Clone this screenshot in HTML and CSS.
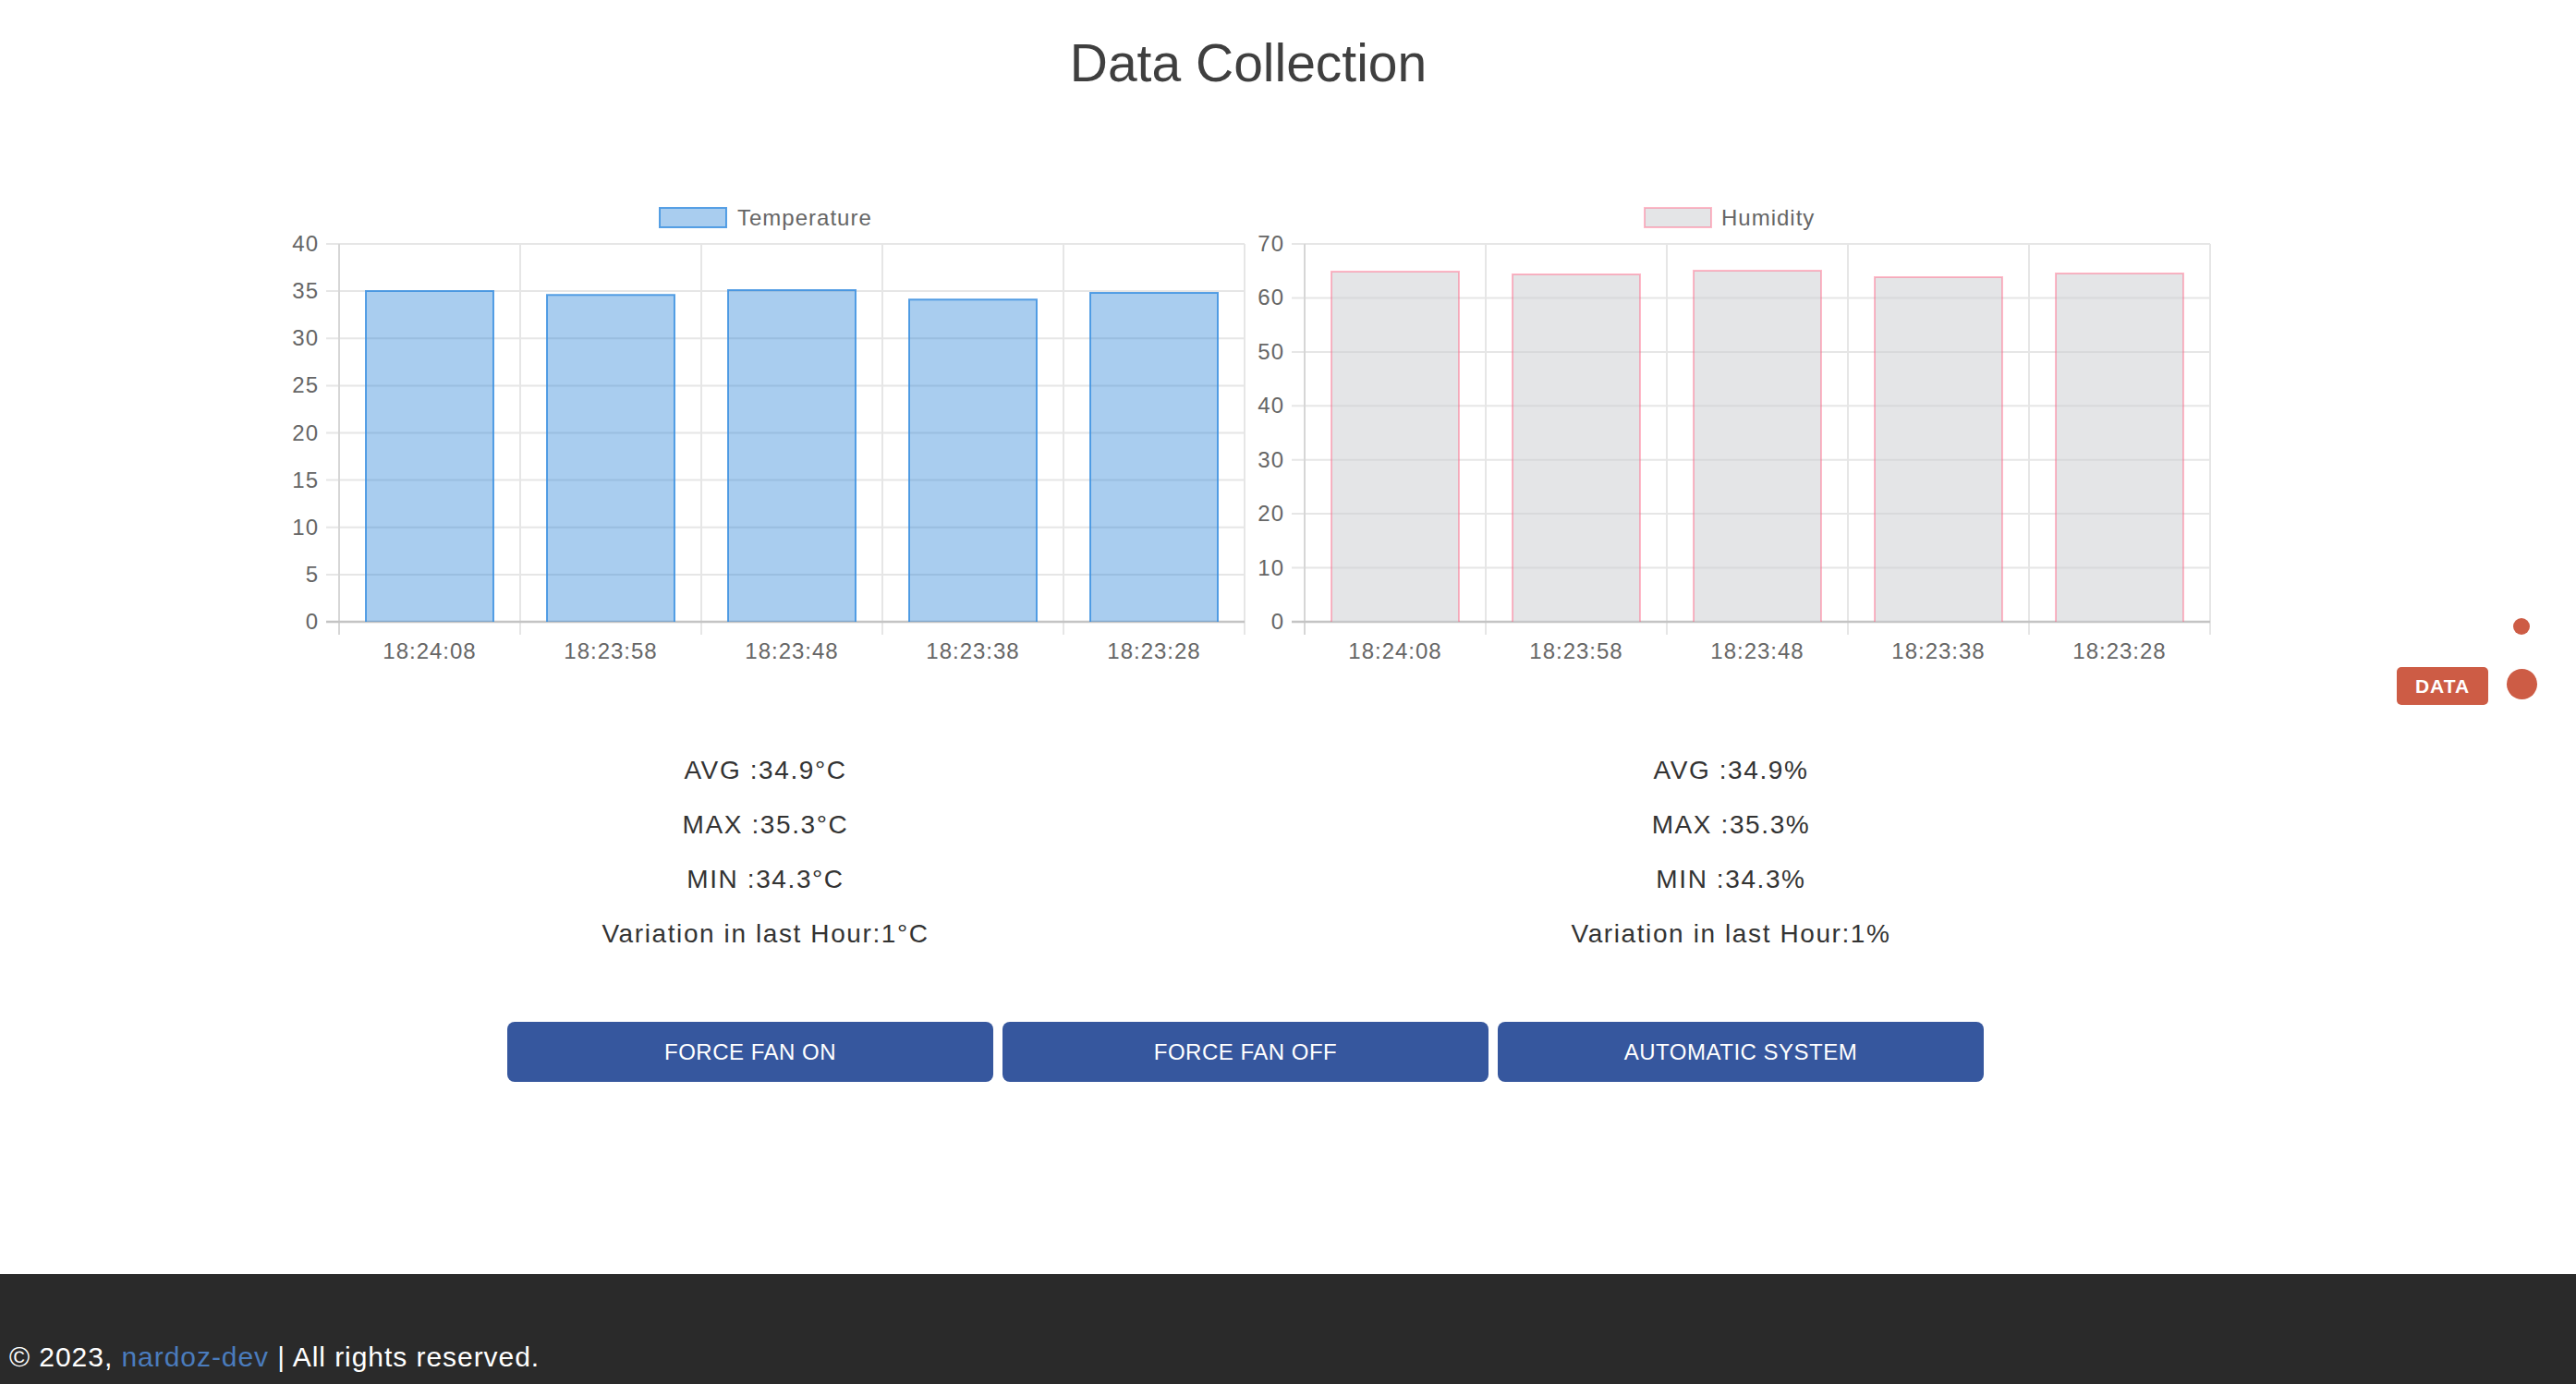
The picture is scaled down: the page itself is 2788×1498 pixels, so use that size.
FILE: index.html
```html
<!DOCTYPE html>
<html lang="en">
<head>
<meta charset="utf-8">
<title>Data Collection</title>
<link rel="stylesheet" href="styles.css">
</head>
<body>
<div class="page">
  <main class="main">
    <h1 class="title">Data Collection</h1>
    <section class="charts">
      <div class="col">
        <svg class="chart" width="1045" height="540" viewBox="0 0 1045 540">
          <rect class="legend-box temp-bar" x="408" y="25" width="72" height="21"/>
          <text class="legend-text" x="492" y="44">Temperature</text>
          <g class="grid">
            <line x1="47" y1="64" x2="1041" y2="64"/>
            <line x1="47" y1="115.1" x2="1041" y2="115.1"/>
            <line x1="47" y1="166.3" x2="1041" y2="166.3"/>
            <line x1="47" y1="217.4" x2="1041" y2="217.4"/>
            <line x1="47" y1="268.5" x2="1041" y2="268.5"/>
            <line x1="47" y1="319.6" x2="1041" y2="319.6"/>
            <line x1="47" y1="370.8" x2="1041" y2="370.8"/>
            <line x1="47" y1="421.9" x2="1041" y2="421.9"/>
            <line x1="257" y1="64" x2="257" y2="487"/>
            <line x1="453" y1="64" x2="453" y2="487"/>
            <line x1="649" y1="64" x2="649" y2="487"/>
            <line x1="845" y1="64" x2="845" y2="487"/>
            <line x1="1041" y1="64" x2="1041" y2="487"/>
          </g>
          <line class="axis" x1="61" y1="64" x2="61" y2="487"/>
          <line class="zero" x1="47" y1="473" x2="1041" y2="473"/>
          <g class="ylabels">
            <text x="39" y="72">40</text>
            <text x="39" y="123.1">35</text>
            <text x="39" y="174.3">30</text>
            <text x="39" y="225.4">25</text>
            <text x="39" y="276.5">20</text>
            <text x="39" y="327.6">15</text>
            <text x="39" y="378.8">10</text>
            <text x="39" y="429.9">5</text>
            <text x="39" y="481">0</text>
          </g>
          <g class="temp-bar">
            <path d="M90 473 V115.1 H228 V473"/>
            <path d="M286 473 V119.2 H424 V473"/>
            <path d="M482 473 V114.1 H620 V473"/>
            <path d="M678 473 V124.3 H816 V473"/>
            <path d="M874 473 V117.1 H1012 V473"/>
          </g>
          <g class="xlabels">
            <text x="159" y="513">18:24:08</text>
            <text x="355" y="513">18:23:58</text>
            <text x="551" y="513">18:23:48</text>
            <text x="747" y="513">18:23:38</text>
            <text x="943" y="513">18:23:28</text>
          </g>
        </svg>
        <div class="stats">
          <p>AVG :34.9°C</p>
          <p>MAX :35.3°C</p>
          <p>MIN :34.3°C</p>
          <p>Variation in last Hour:1°C</p>
        </div>
      </div>
      <div class="col">
        <svg class="chart" width="1045" height="540" viewBox="0 0 1045 540">
          <rect class="legend-box hum-bar" x="429" y="25" width="72" height="21"/>
          <text class="legend-text" x="512" y="44">Humidity</text>
          <g class="grid">
            <line x1="47" y1="64" x2="1041" y2="64"/>
            <line x1="47" y1="122.4" x2="1041" y2="122.4"/>
            <line x1="47" y1="180.9" x2="1041" y2="180.9"/>
            <line x1="47" y1="239.3" x2="1041" y2="239.3"/>
            <line x1="47" y1="297.7" x2="1041" y2="297.7"/>
            <line x1="47" y1="356.1" x2="1041" y2="356.1"/>
            <line x1="47" y1="414.6" x2="1041" y2="414.6"/>
            <line x1="257" y1="64" x2="257" y2="487"/>
            <line x1="453" y1="64" x2="453" y2="487"/>
            <line x1="649" y1="64" x2="649" y2="487"/>
            <line x1="845" y1="64" x2="845" y2="487"/>
            <line x1="1041" y1="64" x2="1041" y2="487"/>
          </g>
          <line class="axis" x1="61" y1="64" x2="61" y2="487"/>
          <line class="zero" x1="47" y1="473" x2="1041" y2="473"/>
          <g class="ylabels">
            <text x="39" y="72">70</text>
            <text x="39" y="130.4">60</text>
            <text x="39" y="188.9">50</text>
            <text x="39" y="247.3">40</text>
            <text x="39" y="305.7">30</text>
            <text x="39" y="364.1">20</text>
            <text x="39" y="422.6">10</text>
            <text x="39" y="481">0</text>
          </g>
          <g class="hum-bar">
            <path d="M90 473 V94 H228 V473"/>
            <path d="M286 473 V97 H424 V473"/>
            <path d="M482 473 V93 H620 V473"/>
            <path d="M678 473 V100 H816 V473"/>
            <path d="M874 473 V96 H1012 V473"/>
          </g>
          <g class="xlabels">
            <text x="159" y="513">18:24:08</text>
            <text x="355" y="513">18:23:58</text>
            <text x="551" y="513">18:23:48</text>
            <text x="747" y="513">18:23:38</text>
            <text x="943" y="513">18:23:28</text>
          </g>
        </svg>
        <div class="stats">
          <p>AVG :34.9%</p>
          <p>MAX :35.3%</p>
          <p>MIN :34.3%</p>
          <p>Variation in last Hour:1%</p>
        </div>
      </div>
    </section>
    <div class="buttons">
      <button class="btn" type="button">FORCE FAN ON</button>
      <button class="btn" type="button">FORCE FAN OFF</button>
      <button class="btn" type="button">AUTOMATIC SYSTEM</button>
    </div>
  </main>
  <footer class="footer">
    <p class="copy">© 2023, <a class="link" href="#">nardoz-dev</a> | All rights reserved.</p>
  </footer>
</div>
<div class="widget">
  <span class="dot dot-small"></span>
  <span class="badge">DATA</span>
  <span class="dot dot-big"></span>
</div>
</body>
</html>
```

FILE: styles.css
```css
* { box-sizing: border-box; }

html, body {
  margin: 0;
  padding: 0;
  background: #ffffff;
}

body {
  position: relative;
  font-family: "Liberation Sans", Arial, Helvetica, sans-serif;
  color: #333;
}

.page {
  min-height: 100vh;
  display: flex;
  flex-direction: column;
}

.main {
  width: 2702px;
}

.title {
  margin: 40px 0 0;
  font-size: 57px;
  line-height: 56px;
  font-weight: 400;
  text-align: center;
  color: #3f3f3f;
}

.charts {
  margin: 104px auto 0;
  width: 2090px;
  display: flex;
}

.col {
  width: 1045px;
  display: flex;
  flex-direction: column;
  align-items: center;
}

.chart {
  display: block;
  font-family: "Liberation Sans", Arial, Helvetica, sans-serif;
}

.chart text {
  font-size: 24px;
  letter-spacing: 1px;
  fill: #666;
}

.legend-text { text-anchor: start; }

.ylabels text { text-anchor: end; }

.xlabels text { text-anchor: middle; }

.grid line {
  stroke: #e6e6e6;
  stroke-width: 2;
}

.axis {
  stroke: #d6d6d6;
  stroke-width: 2;
}

.zero {
  stroke: #c4c4c4;
  stroke-width: 2.5;
}

.temp-bar {
  fill: rgba(40, 130, 215, 0.4);
  stroke: rgba(60, 145, 225, 0.85);
  stroke-width: 2;
}

.hum-bar {
  fill: rgba(201, 203, 207, 0.5);
  stroke: rgba(255, 99, 132, 0.45);
  stroke-width: 2;
}

.stats {
  margin-top: 63.5px;
  text-align: center;
  color: #333;
}

.stats p {
  margin: 0;
  font-size: 28px;
  line-height: 59px;
  letter-spacing: 1.6px;
}

.buttons {
  margin: 66.5px auto 0;
  width: 1598px;
  display: flex;
  gap: 10px;
  transform: translateX(-3px);
}

.btn {
  flex: 1;
  height: 65px;
  border: none;
  border-radius: 8px;
  background: #36579e;
  color: #fff;
  font-family: "Liberation Sans", Arial, Helvetica, sans-serif;
  font-size: 24px;
  letter-spacing: 0.5px;
  padding: 0;
  cursor: pointer;
}

.footer {
  margin-top: auto;
  height: 119px;
  background: #2a2a2a;
  display: flex;
  align-items: flex-end;
  padding: 0 10px 11px;
}

.copy {
  margin: 0;
  color: #fff;
  font-size: 30px;
  line-height: 36px;
  letter-spacing: 0.95px;
}

.link {
  color: #4a7cbd;
  text-decoration: none;
}

.widget {
  position: absolute;
  top: 0;
  left: 0;
}

.dot {
  position: absolute;
  border-radius: 50%;
  background: #cd5c45;
}

.dot-small {
  left: 2720px;
  top: 669px;
  width: 18px;
  height: 18px;
}

.dot-big {
  left: 2713px;
  top: 724px;
  width: 33px;
  height: 33px;
}

.badge {
  position: absolute;
  left: 2594px;
  top: 722px;
  width: 99px;
  height: 41px;
  border-radius: 5px;
  background: #cd5c45;
  color: #fff;
  font-weight: 700;
  font-size: 21px;
  letter-spacing: 1px;
  display: flex;
  align-items: center;
  justify-content: center;
}
```
